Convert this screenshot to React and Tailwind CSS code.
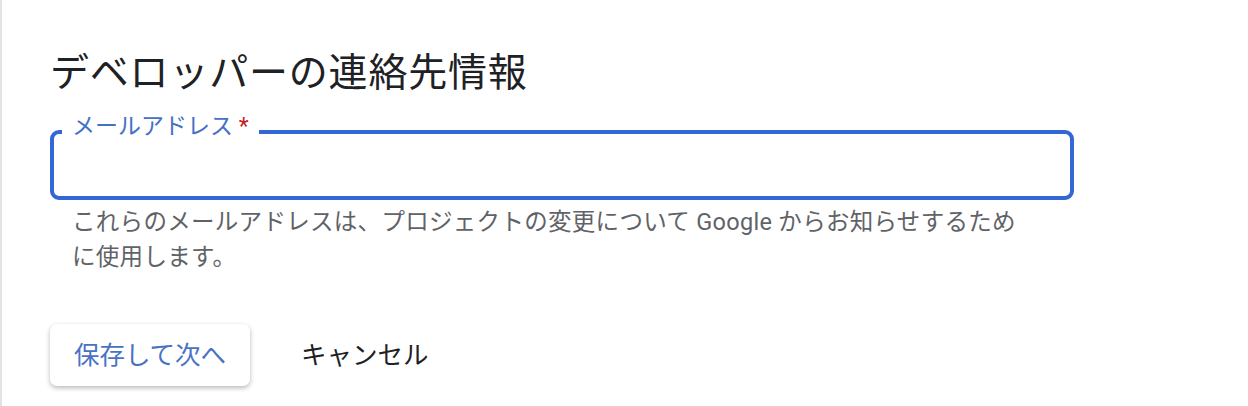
export default function App() {
  const font = { fontFamily: "Roboto, 'Noto Sans CJK JP', sans-serif" };
  return (
    <div className="h-[406px] w-[1248px] bg-white border-l-2 border-[#e3e3e3] overflow-hidden" style={font}>
      <div className="pl-[48px] pt-[49px]">
        <h1 className="text-[39px] leading-[48px] text-[#202124] font-normal tracking-[0.8px]">デベロッパーの連絡先情報</h1>
        <fieldset className="mt-[20px] w-[1024px] border-4 border-[#3367d6] rounded-[9px] px-0 m-0">
          <legend className="ml-[8px] px-[10px] text-[23px] leading-[20px] pb-[10px] text-[#4470c6]">
            メールアドレス <span className="text-[#c5221f]">*</span>
          </legend>
          <div className="h-[49px]" />
        </fieldset>
        <p className="mt-[5px] pl-[22px] w-[968px] text-[23.5px] leading-[35px] text-[#5f6368] tracking-[0.3px]">
          これらのメールアドレスは、プロジェクトの変更について Google からお知らせするために使用します。
        </p>
        <div className="mt-[49px] flex items-center">
          <button className="w-[200px] h-[62px] rounded-[7px] bg-white text-[25.5px] text-[#4a72c4] shadow-[0_2px_5px_rgba(0,0,0,0.28)]">
            保存して次へ
          </button>
          <button className="ml-[51px] text-[25.5px] text-[#202124]">キャンセル</button>
        </div>
      </div>
    </div>
  );
}
